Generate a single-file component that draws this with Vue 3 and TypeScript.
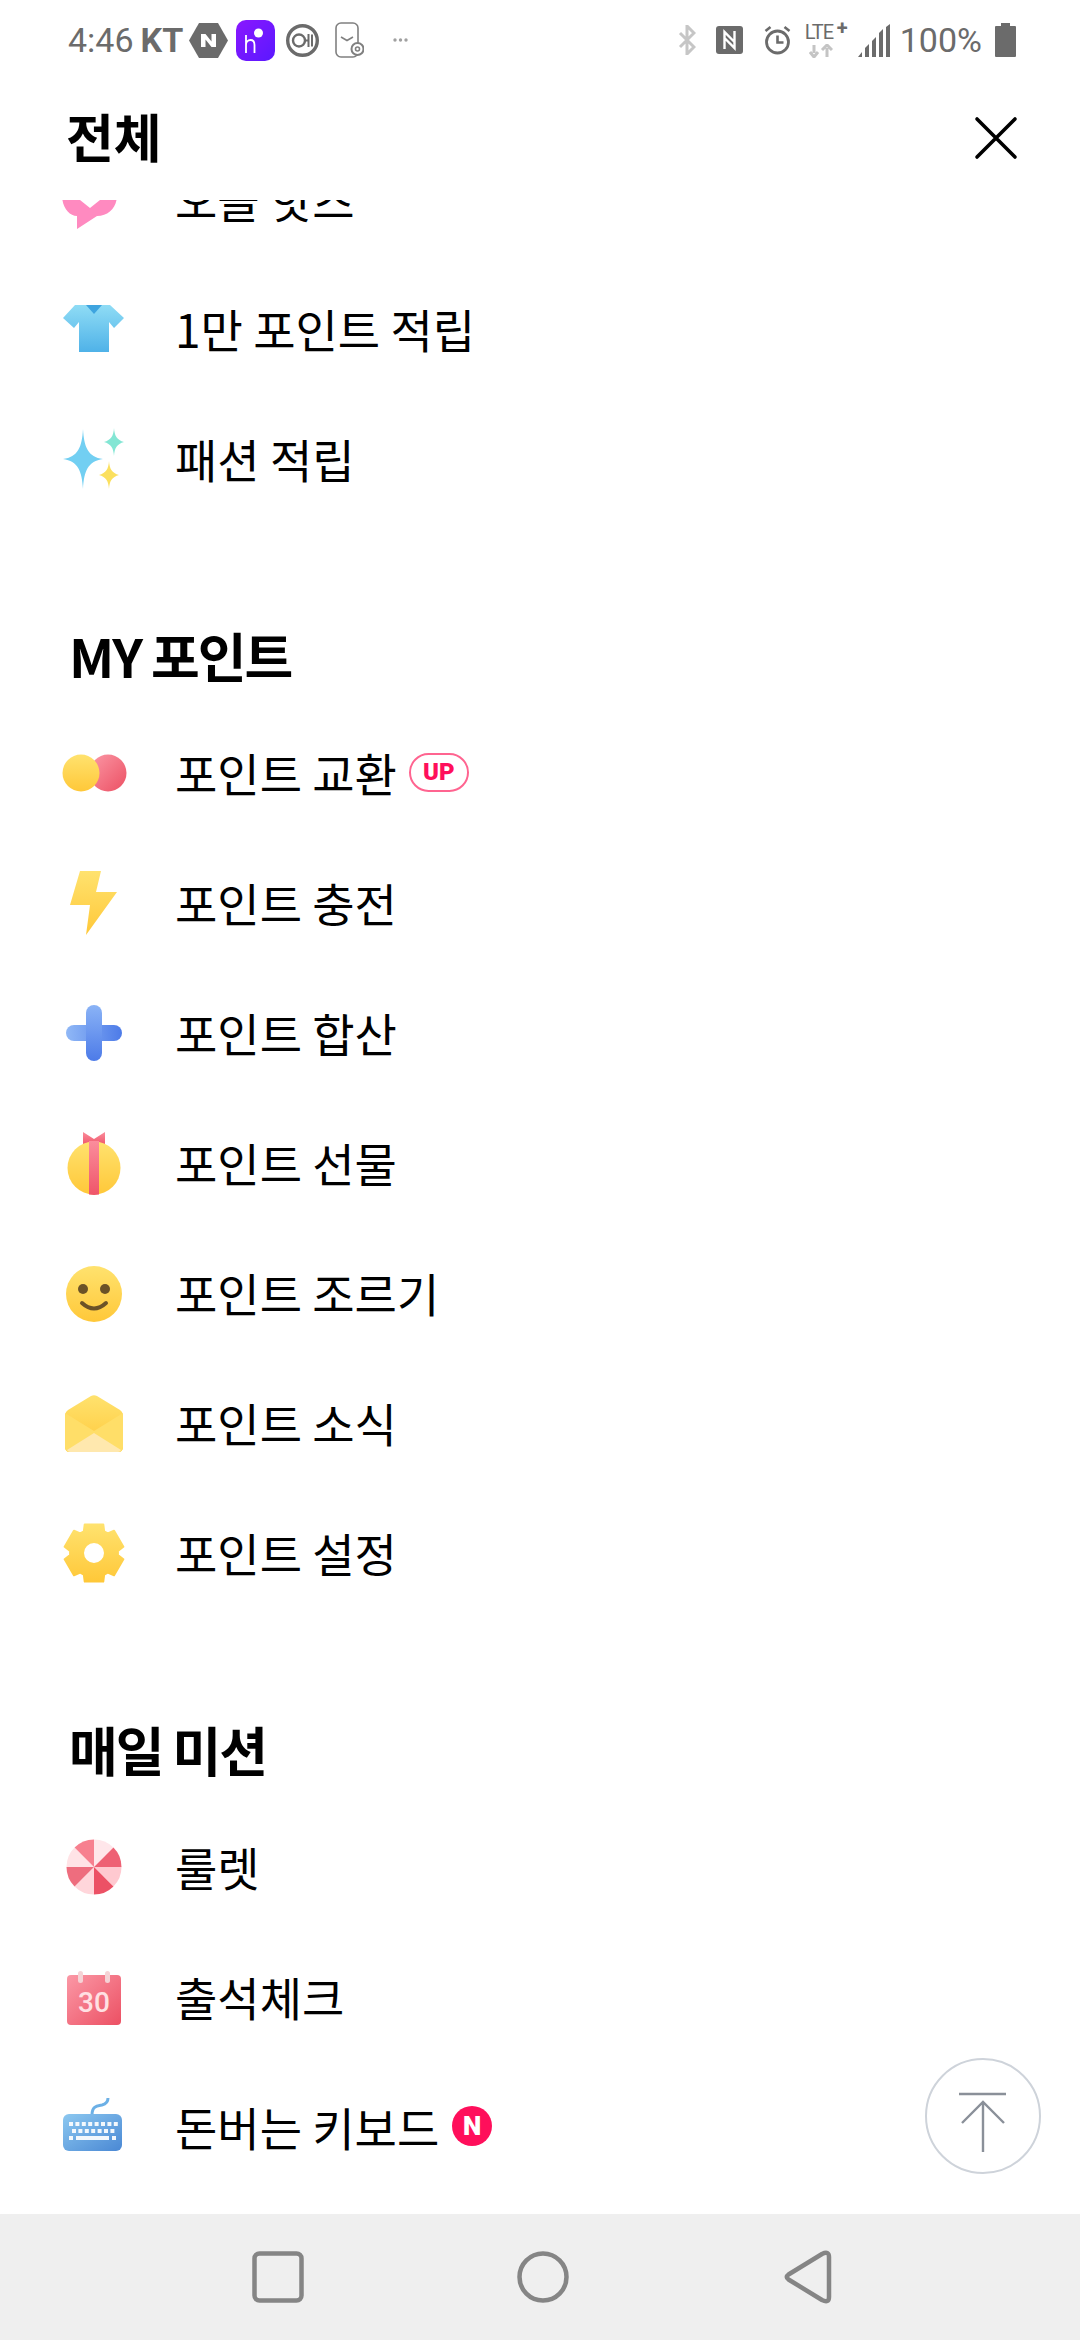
<template>
  <div class="screen">
    <!-- shared gradients for the menu icons -->
    <svg class="defs" aria-hidden="true">
      <defs>
        <linearGradient id="gYellow" x1="0" y1="0" x2="0" y2="1"><stop offset="0" stop-color="#ffe26e" /><stop offset="1" stop-color="#ffc839" /></linearGradient>
        <linearGradient id="gRed" x1="0" y1="0" x2="1" y2="1"><stop offset="0" stop-color="#fb98a6" /><stop offset="1" stop-color="#ec5063" /></linearGradient>
        <linearGradient id="gRibbon" x1="0" y1="0" x2="0" y2="1"><stop offset="0" stop-color="#fb8d9c" /><stop offset="1" stop-color="#ef5569" /></linearGradient>
        <linearGradient id="gSky" x1="0" y1="0" x2="0" y2="1"><stop offset="0" stop-color="#8fdcf5" /><stop offset="1" stop-color="#4fb2e8" /></linearGradient>
        <linearGradient id="gBlueH" x1="0" y1="0" x2="1" y2="0"><stop offset="0" stop-color="#90b8f6" /><stop offset="1" stop-color="#4d7be8" /></linearGradient>
        <linearGradient id="gBlueV" x1="0" y1="0" x2="0" y2="1"><stop offset="0" stop-color="#8ab3f6" /><stop offset="1" stop-color="#4d7be8" /></linearGradient>
        <linearGradient id="gKey" x1="0" y1="0" x2="1" y2="1"><stop offset="0" stop-color="#8cc8f0" /><stop offset="1" stop-color="#4a88d4" /></linearGradient>
        <linearGradient id="gPurple" x1="0" y1="0" x2="1" y2="1"><stop offset="0" stop-color="#8a18ff" /><stop offset="1" stop-color="#5a18ff" /></linearGradient>
      </defs>
    </svg>

    <div class="status-bar">
      <div class="status-left">
        <span class="clock">4:46</span>
        <span class="carrier">KT</span>
        <svg class="s-naver" width="39" height="37" viewBox="0 0 39 37">
          <path d="M10 1h19l10 17.500-10 17.500H10L0 18.500z" fill="#6b6b6b" />
          <path d="M12 12h4.500l6 7.500V12H27v13h-4.500l-6-7.500V25H12z" fill="#fff" />
        </svg>
        <svg class="s-h" width="39" height="41" viewBox="0 0 39 41">
          <rect width="39" height="41" rx="10" fill="url(#gPurple)" />
          <path d="M10 15v18M10 25c0-3 2-5 4.500-5s4 2 4 5v8" fill="none" stroke="#fff" stroke-width="1.800" />
          <circle cx="22.500" cy="13" r="4.500" fill="#fff" />
        </svg>
        <svg class="s-ok" width="33" height="33" viewBox="0 0 33 33">
          <circle cx="16.500" cy="16.500" r="14.800" fill="none" stroke="#6b6b6b" stroke-width="3.400" />
          <circle cx="13" cy="16.500" r="6" fill="none" stroke="#6b6b6b" stroke-width="2.400" />
          <path d="M19 16.500h3.500M22.500 10v13M26 10.500v12" fill="none" stroke="#6b6b6b" stroke-width="2" />
        </svg>
        <svg class="s-watch" width="29" height="36" viewBox="0 0 29 36">
          <rect x="1" y="1" width="22" height="34" rx="5" fill="none" stroke="#808080" stroke-width="1.600" />
          <path d="M6 15l6 3.500 6-3.500" fill="none" stroke="#808080" stroke-width="1.600" />
          <circle cx="22.500" cy="27" r="6" fill="#fff" stroke="#808080" stroke-width="2" />
          <circle cx="22.500" cy="27" r="2" fill="none" stroke="#808080" stroke-width="1.600" />
        </svg>
        <svg class="s-dots" width="15" height="4" viewBox="0 0 15 4">
          <circle cx="2" cy="2" r="1.700" fill="#a0a0a0" /><circle cx="7.500" cy="2" r="1.700" fill="#a0a0a0" /><circle cx="13" cy="2" r="1.700" fill="#a0a0a0" />
        </svg>
      </div>
      <div class="status-right">
        <svg width="18" height="30" viewBox="0 0 18 30">
          <path d="M2 8l14 14-7 7V1l7 7L2 22" fill="none" stroke="#c6c6c6" stroke-width="3" />
        </svg>
        <svg class="s-nfc" width="27" height="28" viewBox="0 0 27 28">
          <rect width="27" height="28" rx="3" fill="#6b6b6b" />
          <path d="M8.500 23V6l10 10M18.500 5v17L8.500 12" fill="none" stroke="#fff" stroke-width="2.400" />
        </svg>
        <svg class="s-alarm" width="27" height="30" viewBox="0 0 27 30">
          <circle cx="13.500" cy="17" r="11" fill="none" stroke="#6b6b6b" stroke-width="2.800" />
          <path d="M13.500 10.500v7h6M1.500 6l5-4M25.500 6l-5-4" fill="none" stroke="#6b6b6b" stroke-width="2.600" />
        </svg>
        <div class="s-lte">
          <span class="lte-text">LTE</span><span class="lte-plus">+</span>
          <svg width="24" height="14" viewBox="0 0 24 14">
            <path d="M5 1v8M1 8l4 5 4-5" fill="none" stroke="#c4c4c4" stroke-width="3" />
            <path d="M18 13V4M13 6l5-5 5 5" fill="none" stroke="#c4c4c4" stroke-width="3" />
          </svg>
        </div>
        <svg class="s-signal" width="32" height="33" viewBox="0 0 32 33">
          <path d="M0 33l4-5v5zM7 33v-9l4-4v13zM14 33V17l4-4v20zM21 33V9l4-4v28zM28 33V3l4-3v33z" fill="#6b6b6b" />
        </svg>
        <span class="percent">100%</span>
        <svg class="s-battery" width="21" height="34" viewBox="0 0 21 34">
          <path d="M6 0h9v3h5a1 1 0 0 1 1 1v29a1 1 0 0 1-1 1H1a1 1 0 0 1-1-1V4a1 1 0 0 1 1-1h5z" fill="#6b6b6b" />
        </svg>
      </div>
    </div>

    <header class="title-bar">
      <h1>전체</h1>
      <svg class="close" width="44" height="44" viewBox="0 0 44 44">
        <path d="M3 3l38 38M41 3L3 41" fill="none" stroke="#000" stroke-width="3.600" stroke-linecap="round" />
      </svg>
    </header>

    <main class="scroller">
      <div class="content">
        <section v-for="section in sections" :key="section.title">
          <h2 v-if="section.title !== 'top'">{{ section.title }}</h2>
          <div v-for="item in section.items" :key="item.label" class="row">
            <svg class="icon" width="66" height="66" viewBox="0 0 66 66">
              <template v-if="item.icon === 'heart'">
                <path d="M1 30c0 12 7 21 15 21v13l20-13c12 0 20-9 20-21v-5L39 35l-10 8-10-8L1 25z" fill="#ff8ac0" />
              </template>
              <template v-else-if="item.icon === 'shirt'">
                <path d="M14 10h35l14 13-10 10-5-6v30H18V27l-5 6L2 23z" fill="url(#gSky)" />
                <path d="M25 10h16l-8 9z" fill="#3ea4df" />
              </template>
              <template v-else-if="item.icon === 'sparkle'">
                <path d="M22 4c1 18 5 28 20 30-15 2-19 12-20 30-1-18-5-28-20-30 15-2 19-12 20-30z" fill="#72cff2" />
                <path d="M53 3c.5 8 3 12 10 14-7 2-9.500 6-10 14-.5-8-3-12-10-14 7-2 9.500-6 10-14z" fill="#83e6d4" />
                <path d="M48 36c.5 8 3 12 10 14-7 2-9.500 6-10 14-.5-8-3-12-10-14 7-2 9.500-6 10-14z" fill="#fbe05e" />
              </template>
              <template v-else-if="item.icon === 'dots'">
                <circle cx="47" cy="34" r="18.500" fill="url(#gRed)" />
                <circle cx="20" cy="34" r="18.500" fill="url(#gYellow)" />
              </template>
              <template v-else-if="item.icon === 'bolt'">
                <path d="M19 2h21l-5 21h21L25 66l4-30H9z" fill="url(#gYellow)" />
              </template>
              <template v-else-if="item.icon === 'plus'">
                <rect x="5" y="26" width="56" height="16" rx="8" fill="url(#gBlueH)" />
                <rect x="25" y="6" width="16" height="56" rx="8" fill="url(#gBlueV)" />
              </template>
              <template v-else-if="item.icon === 'gift'">
                <path d="M22 3l11 7 11-7v13H22z" fill="url(#gRibbon)" />
                <circle cx="33" cy="39" r="26.500" fill="url(#gYellow)" />
                <path d="M28 12h10v53.500q-5 .8-10 0z" fill="url(#gRibbon)" />
              </template>
              <template v-else-if="item.icon === 'smile'">
                <circle cx="33" cy="35" r="28" fill="url(#gYellow)" />
                <circle cx="22" cy="30" r="5" fill="#6b5227" />
                <circle cx="44" cy="30" r="5" fill="#6b5227" />
                <path d="M21 44q12 11 24 0" fill="none" stroke="#6b5227" stroke-width="4" stroke-linecap="round" />
              </template>
              <template v-else-if="item.icon === 'mail'">
                <path d="M4 26q0-3 3-5L30 7q3-1.500 6 0l23 14q3 2 3 5v32q0 5-5 5H9q-5 0-5-5z" fill="url(#gYellow)" />
                <path d="M4 24l29 18 29-18v34q0 5-5 5H9q-5 0-5-5z" fill="#ffde68" />
                <path d="M6 61l27-17 27 17q-1 2-3 2H9q-2 0-3-2z" fill="#ffe8ae" />
              </template>
              <template v-else-if="item.icon === 'gear'">
                <path :d="gearPath" fill="url(#gYellow)" fill-rule="evenodd" stroke="url(#gYellow)" stroke-width="2" stroke-linejoin="round" />
              </template>
              <template v-else-if="item.icon === 'roulette'">
                <path v-for="s in rouletteSlices" :key="s.d" :d="s.d" :fill="s.fill" />
              </template>
              <template v-else-if="item.icon === 'calendar'">
                <rect x="6" y="12" width="54" height="50" rx="4" fill="url(#gRed)" />
                <rect x="17" y="8" width="5" height="12" rx="2.500" fill="#f5d3d6" />
                <rect x="44" y="8" width="5" height="12" rx="2.500" fill="#f5d3d6" />
                <text x="33" y="49" text-anchor="middle" class="cal-num">30</text>
              </template>
              <template v-else-if="item.icon === 'keyboard'">
                <path d="M31 22c0-9 5-9 10-10 4-1 6-3 6-7" fill="none" stroke="#6cb0e6" stroke-width="3" />
                <rect x="2" y="21" width="59" height="37" rx="6" fill="url(#gKey)" />
                <g fill="#fff" opacity=".92">
                  <rect v-for="k in keyCaps" :key="k.x + '-' + k.y" :x="k.x" :y="k.y" :width="k.w" height="4" />
                </g>
              </template>
            </svg>
            <span class="label">{{ item.label }}</span>
            <span v-if="item.badge === 'UP'" class="badge-up">UP</span>
            <span v-if="item.badge === 'N'" class="badge-new">N</span>
          </div>
        </section>
      </div>

      <button class="to-top" type="button" aria-label="맨 위로">
        <svg width="50" height="60" viewBox="0 0 50 60">
          <path d="M1 2h47M25 10v50M4 31l21-21 21 21" fill="none" stroke="#8a9099" stroke-width="2.400" />
        </svg>
      </button>
    </main>

    <footer class="nav-bar">
      <svg width="60" height="60" viewBox="0 0 60 60">
        <rect x="6.500" y="6.500" width="47" height="47" rx="5" fill="none" stroke="#858585" stroke-width="4.500" />
      </svg>
      <svg width="60" height="60" viewBox="0 0 60 60">
        <circle cx="30" cy="30" r="23.500" fill="none" stroke="#858585" stroke-width="4.500" />
      </svg>
      <svg width="60" height="60" viewBox="0 0 60 60">
        <path d="M10.500 27.500L44 7q7-3.500 7 3v40q0 6.500-7 3L10.500 32.500q-3.500-2.500 0-5z" fill="none" stroke="#858585" stroke-width="4.500" stroke-linejoin="round" />
      </svg>
    </footer>
  </div>
</template>

<script setup lang="ts">
interface MenuItem {
  label: string
  icon: string
  badge?: 'UP' | 'N'
}

interface MenuSection {
  title: string
  items: MenuItem[]
}

const sections: MenuSection[] = [
  {
    title: 'top',
    items: [
      { label: '오늘 핫츠', icon: 'heart' },
      { label: '1만 포인트 적립', icon: 'shirt' },
      { label: '패션 적립', icon: 'sparkle' }
    ]
  },
  {
    title: 'MY 포인트',
    items: [
      { label: '포인트 교환', icon: 'dots', badge: 'UP' },
      { label: '포인트 충전', icon: 'bolt' },
      { label: '포인트 합산', icon: 'plus' },
      { label: '포인트 선물', icon: 'gift' },
      { label: '포인트 조르기', icon: 'smile' },
      { label: '포인트 소식', icon: 'mail' },
      { label: '포인트 설정', icon: 'gear' }
    ]
  },
  {
    title: '매일 미션',
    items: [
      { label: '룰렛', icon: 'roulette' },
      { label: '출석체크', icon: 'calendar' },
      { label: '돈버는 키보드', icon: 'keyboard', badge: 'N' }
    ]
  }
]

function polar(cx: number, cy: number, r: number, deg: number): string {
  const a = (deg * Math.PI) / 180
  return `${(cx + r * Math.sin(a)).toFixed(2)} ${(cy - r * Math.cos(a)).toFixed(2)}`
}

// six teeth, hole cut out with evenodd
const gearPath = (() => {
  let d = ''
  for (let i = 0; i < 6; i++) {
    const c = i * 60
    d += `${i === 0 ? 'M' : 'L'}${polar(33, 34, 24, c - 25)}L${polar(33, 34, 30, c - 18)}L${polar(33, 34, 30, c + 18)}L${polar(33, 34, 24, c + 25)}`
  }
  return `${d}ZM44 34a11 11 0 1 0-22 0a11 11 0 1 0 22 0Z`
})()

const sliceFills = ['#ffe6ea', '#ee6174', '#ffc9d0', '#ec5165', '#ffd6db', '#ee6d7e', '#ffe3e6', '#f7808f']
const rouletteSlices = sliceFills.map((fill, i) => ({
  fill,
  d: `M33 34L${polar(33, 34, 27.5, i * 45)}A27.5 27.5 0 0 1 ${polar(33, 34, 27.5, (i + 1) * 45)}Z`
}))

const keyCaps: { x: number; y: number; w: number }[] = []
for (let i = 0; i < 8; i++) keyCaps.push({ x: 8 + i * 6.4, y: 29, w: 4 })
for (let i = 0; i < 7; i++) keyCaps.push({ x: 11 + i * 6.4, y: 36, w: 4 })
keyCaps.push({ x: 8, y: 43, w: 4 }, { x: 15, y: 43, w: 33 }, { x: 51, y: 43, w: 4 })
</script>

<style scoped>
.screen {
  width: 1080px;
  height: 2340px;
  display: flex;
  flex-direction: column;
  background: #fff;
  font-family: "Noto Sans CJK KR", "Noto Sans", sans-serif;
  color: #000;
  overflow: hidden;
}

.defs {
  position: absolute;
  width: 0;
  height: 0;
}

.status-bar {
  height: 80px;
  flex: none;
  box-sizing: border-box;
  display: flex;
  justify-content: space-between;
  align-items: center;
  padding: 0 64px 0 68px;
  font-family: Roboto, sans-serif;
  color: #6b6b6b;
}

.status-left,
.status-right {
  display: flex;
  align-items: center;
}

.clock {
  font-size: 34px;
}

.carrier {
  font-size: 34px;
  font-weight: 700;
  margin-left: 7px;
}

.s-naver { margin-left: 6px; }
.s-h { margin-left: 8px; }
.s-ok { margin-left: 11px; }
.s-watch { margin-left: 16px; }
.s-dots { margin-left: 29px; }

.s-nfc { margin-left: 20px; }
.s-alarm { margin-left: 21px; }
.s-signal { margin-left: 10px; }
.s-battery { margin-left: 13px; }

.s-lte {
  position: relative;
  width: 43px;
  height: 32px;
  margin-left: 14px;
}

.lte-text {
  position: absolute;
  left: 0;
  top: -3px;
  font-size: 20px;
  line-height: 22px;
  letter-spacing: -1px;
}

.lte-plus {
  position: absolute;
  right: 0;
  top: -7px;
  font-size: 20px;
  font-weight: 700;
  line-height: 22px;
}

.s-lte svg {
  position: absolute;
  left: 4px;
  bottom: -2px;
}

.percent {
  font-size: 34px;
  margin-left: 10px;
}

.title-bar {
  height: 120px;
  flex: none;
  box-sizing: border-box;
  display: flex;
  justify-content: space-between;
  align-items: center;
  padding: 0 62px 8px 66px;
}

.close {
  margin-top: 4px;
}

h1 {
  margin: 0;
  font-size: 52px;
  font-weight: 700;
  line-height: 1;
}

.scroller {
  flex: 1;
  min-height: 0;
  position: relative;
  overflow: hidden;
}

/* list is scrolled a little: the first row is cut by the header */
.content {
  margin-top: -67px;
}

h2 {
  margin: 0;
  height: 184px;
  padding: 82px 0 0 69px;
  box-sizing: border-box;
  font-size: 53px;
  font-weight: 700;
  letter-spacing: -2px;
  line-height: 100px;
}

.row {
  height: 130px;
  display: flex;
  align-items: center;
  padding-left: 61px;
}

.icon {
  flex: none;
}

.label {
  margin-left: 48px;
  font-size: 46px;
  line-height: 60px;
  white-space: nowrap;
}

.cal-num {
  font-family: Roboto, sans-serif;
  font-size: 28px;
  font-weight: 500;
  fill: #ffe0e3;
}

.badge-up {
  margin-left: 12px;
  width: 60px;
  height: 39px;
  box-sizing: border-box;
  border: 2px solid #ff6490;
  border-radius: 20px;
  color: #ff0f5b;
  font-family: Roboto, sans-serif;
  font-size: 24px;
  font-weight: 900;
  line-height: 35px;
  text-align: center;
}

.badge-new {
  margin-left: 13px;
  width: 40px;
  height: 40px;
  border-radius: 50%;
  background: #ff0f5b;
  color: #fff;
  font-family: Roboto, sans-serif;
  font-size: 26px;
  font-weight: 900;
  line-height: 40px;
  text-align: center;
}

.to-top {
  position: absolute;
  right: 39px;
  bottom: 40px;
  width: 116px;
  height: 116px;
  padding: 12px 0 0;
  box-sizing: border-box;
  border: 2.5px solid #ced3da;
  border-radius: 50%;
  background: #fff;
  display: flex;
  align-items: center;
  justify-content: center;
}

.nav-bar {
  height: 126px;
  flex: none;
  box-sizing: border-box;
  padding-left: 5px;
  background: #efefef;
  display: flex;
  justify-content: center;
  align-items: center;
  gap: 205px;
}
</style>
